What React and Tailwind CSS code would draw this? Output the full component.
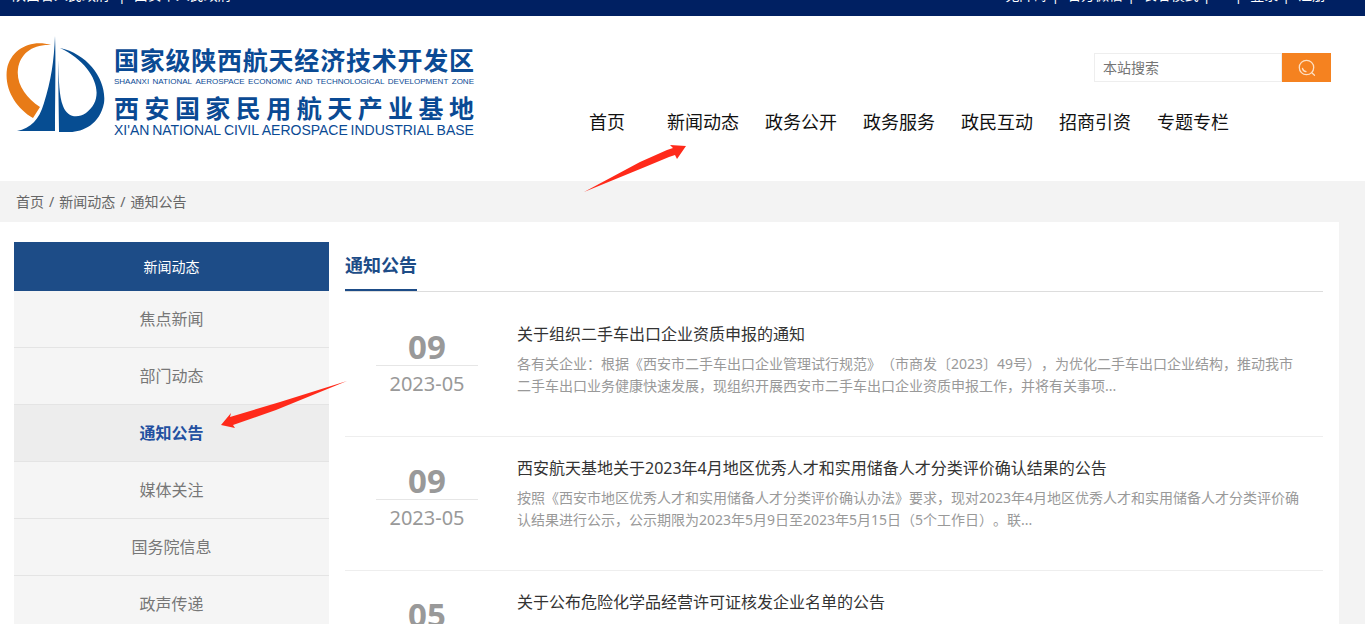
import { Fragment } from 'react';

const govLinks = ['陕西省人民政府', '西安市人民政府'];

const toolLinks = ['无障碍', '官方微信', '长者模式', '登录', '注册'];

const navItems = ['新闻动态', '政务公开', '政务服务', '政民互动', '招商引资', '专题专栏'];

const sideItems = ['焦点新闻', '部门动态', '通知公告', '媒体关注', '国务院信息', '政声传递'];

const notices = [
  {
    day: '09',
    month: '2023-05',
    title: '关于组织二手车出口企业资质申报的通知',
    summary:
      '各有关企业：根据《西安市二手车出口企业管理试行规范》（市商发〔2023〕49号），为优化二手车出口企业结构，推动我市二手车出口业务健康快速发展，现组织开展西安市二手车出口企业资质申报工作，并将有关事项...',
  },
  {
    day: '09',
    month: '2023-05',
    title: '西安航天基地关于2023年4月地区优秀人才和实用储备人才分类评价确认结果的公告',
    summary:
      '按照《西安市地区优秀人才和实用储备人才分类评价确认办法》要求，现对2023年4月地区优秀人才和实用储备人才分类评价确认结果进行公示，公示期限为2023年5月9日至2023年5月15日（5个工作日）。联...',
  },
  {
    day: '05',
    month: '2023-05',
    title: '关于公布危险化学品经营许可证核发企业名单的公告',
    summary: '',
  },
];

function TopBar() {
  return (
    <div className="h-4 overflow-hidden bg-[#002062] text-sm leading-5 text-white">
      <div className="-mt-[15px] flex justify-between pr-[39px] pl-3">
        <div className="flex gap-2">
          {govLinks.map((item, i) => (
            <Fragment key={item}>
              {i > 0 && <span>|</span>}
              <a href="#">{item}</a>
            </Fragment>
          ))}
        </div>
        <div className="flex">
          {toolLinks.map((item, i) => (
            <Fragment key={item}>
              {i > 0 && <span className="pr-2 pl-1">|</span>}
              {item === '登录' && <span className="pr-2 pl-4">|</span>}
              <a href="#">{item}</a>
            </Fragment>
          ))}
        </div>
      </div>
    </div>
  );
}

// spreads the given pieces over the full width of the logo caption
function Spread({ parts, className }) {
  return (
    <span className={`flex justify-between ${className}`}>
      {parts.map((part, i) => <span key={i}>{part}</span>)}
    </span>
  );
}

function Logo() {
  return (
    <a href="#" className="flex items-start gap-2 pl-1.5 text-[#0a4a94]">
      <svg viewBox="0 0 100 100" className="h-[100px] w-[100px] shrink-0" aria-hidden="true">
        <path d="M45 9C25 3 5 13 1 33C-2 53 10 72 27 82L34 71C20 62 10 48 12 33C14 18 26 8 45 9Z" fill="#e87b17" />
        <path d="M49 0C50 25 49 60 49 95H11C25 92 33 84 38 67C45 45 48 25 49 0Z" fill="#064d92" />
        <path d="M52 24C53 45 53 60 57 70C61 81 71 83 80 77C102 61 88 28 54 12C82 18 101 44 98 67C94 88 77 96 64 96H53Z" fill="#064d92" />
      </svg>
      <span className="flex w-[360px] flex-col pt-2 whitespace-nowrap">
        <Spread parts={[...'国家级陕西航天经济技术开发区']} className="text-[25px] leading-8 font-bold" />
        <Spread
          parts={'SHAANXI NATIONAL AEROSPACE ECONOMIC AND TECHNOLOGICAL DEVELOPMENT ZONE'.split(' ')}
          className="font-['Liberation_Sans',sans-serif] text-[8px] leading-3"
        />
        <Spread parts={[...'西安国家民用航天产业基地']} className="pt-1.5 text-[25px] leading-7 font-bold" />
        <Spread
          parts={"XI'AN NATIONAL CIVIL AEROSPACE INDUSTRIAL BASE".split(' ')}
          className="font-['Liberation_Sans',sans-serif] text-sm leading-4"
        />
      </span>
    </a>
  );
}

function SearchBox() {
  return (
    <form className="flex w-[237px] self-end">
      <input
        type="text"
        aria-label="本站搜索"
        placeholder="本站搜索"
        className="h-[29px] min-w-0 flex-1 border border-[#eeeeee] px-2 text-sm placeholder:text-[#757575]"
      />
      <button type="button" aria-label="搜索" className="flex h-[29px] w-[49px] items-center justify-center bg-[#f58220]">
        <svg viewBox="0 0 18 18" className="h-[18px] w-[18px]" fill="none" stroke="#fde0c4" strokeWidth="1.3" strokeLinecap="round">
          <circle cx="8.5" cy="8.5" r="7.2" />
          <path d="M4.5 9.5C5 11.5 6.3 12.4 8 12.6M13.8 13.8L16.5 16.3" />
        </svg>
      </button>
    </form>
  );
}

function Header() {
  return (
    <header className="relative flex h-[165px] justify-between pt-5 pr-[34px]">
      <Logo />
      <div className="flex flex-col pt-[17px]">
        <SearchBox />
        <nav className="mt-6 mr-[102px] flex gap-[26px] text-lg leading-8 text-[#111111]">
          <a href="#" className="mr-4 hover:text-[#1d4c87]">首页</a>
          {navItems.map((item) => (
            <a key={item} href="#" className="hover:text-[#1d4c87]">{item}</a>
          ))}
        </nav>
      </div>
      <svg viewBox="0 0 104 50" className="absolute top-[128px] left-[583px] h-[50px] w-[104px]" aria-hidden="true">
        <path d="M1 48L57 18L84 6L90 4L87 1L103 2L94 15L92 11L86 13L62 23Z" fill="#ff2a1a" />
      </svg>
    </header>
  );
}

function Sidebar() {
  return (
    <aside className="relative w-[315px] shrink-0">
      <h2 className="bg-[#1d4c87] text-center text-sm leading-[49px] text-white">新闻动态</h2>
      <ul>
        {sideItems.map((item) => (
          <li key={item} className="border-b border-[#e4e4e4]">
            <a
              href="#"
              className={
                item === '通知公告'
                  ? 'block bg-[#ededed] text-center text-base leading-14 font-bold text-[#2350a0]'
                  : 'block bg-[#f5f5f5] text-center text-base leading-14 text-[#777777]'
              }
            >
              {item}
            </a>
          </li>
        ))}
      </ul>
      <svg viewBox="0 0 128 50" className="absolute top-[137px] left-[206px] h-[50px] w-[128px]" aria-hidden="true">
        <path d="M127 2L60 23L10 38L11 34L1 46L15 49L13 46L56 31Z" fill="#ff2a1a" />
      </svg>
    </aside>
  );
}

function Notice({ day, month, title, summary }) {
  return (
    <li className="flex min-h-[134px] gap-[39px] border-b border-[#eeeeee] pt-[17px] pl-[31px]">
      <div className="w-[102px] shrink-0 pt-[9px] text-center text-[#999999]">
        <div className="border-b border-[#e6e6e6] text-[33px] leading-9 font-bold">{day}</div>
        <div className="text-xl leading-9">{month}</div>
      </div>
      <div className="min-w-0 flex-1">
        <h3 className="text-base leading-7 text-[#333333]">
          <a href="#">{title}</a>
        </h3>
        <p className="pt-[5px] pr-5 text-sm leading-[22px] text-[#999999]">{summary}</p>
      </div>
    </li>
  );
}

export default function App() {
  return (
    <div className="h-screen overflow-hidden bg-white font-['Noto_Sans','Noto_Sans_CJK_SC',sans-serif] [text-spacing-trim:space-all]">
      <TopBar />
      <Header />
      <div className="bg-[#f3f3f3] pr-[26px]">
        <div className="flex gap-[5px] px-4 text-sm leading-[41px] text-[#666666]">
          <a href="#">首页</a>
          <span>/</span>
          <a href="#">新闻动态</a>
          <span>/</span>
          <a href="#">通知公告</a>
        </div>
        <main className="flex gap-4 bg-white py-5 pr-4 pl-3.5">
          <Sidebar />
          <section className="min-w-0 flex-1">
            <div className="flex border-b border-[#dddddd]">
              <h1 className="border-b-2 border-[#1d4c87] text-lg leading-[47px] font-bold text-[#1d4c87]">通知公告</h1>
            </div>
            <ul className="pt-[11px]">
              {notices.map((notice) => (
                <Notice key={notice.title} {...notice} />
              ))}
            </ul>
          </section>
        </main>
      </div>
    </div>
  );
}
